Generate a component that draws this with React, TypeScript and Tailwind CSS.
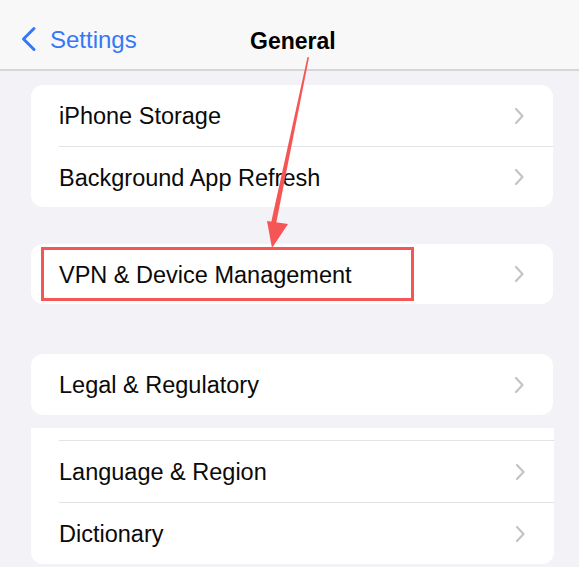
import React from 'react';

const font = { fontFamily: '"Liberation Sans", Arial, sans-serif' };

function Chevron() {
  return (
    <svg width="12" height="18" viewBox="0 0 12 18" className="shrink-0">
      <path d="M3 2 L9.5 9 L3 16" fill="none" stroke="#c4c4c7" strokeWidth="2.2" strokeLinecap="round" strokeLinejoin="round" />
    </svg>
  );
}

function Row({ label, divider = false, tall = false }: { label: string; divider?: boolean; tall?: boolean }) {
  return (
    <div className="pl-[28px]">
      <div
        className={`flex items-center justify-between pr-[28px] ${tall ? 'h-[62px]' : 'h-[61px]'} ${divider ? 'border-t border-[#e3e3e6]' : ''}`}
      >
        <span className="pt-[3px] text-[23.5px] text-[#0a0a0a]">{label}</span>
        <Chevron />
      </div>
    </div>
  );
}

export default function App() {
  return (
    <div className="relative h-[567px] w-[579px] overflow-hidden bg-[#f2f2f7]" style={font}>
      <div className="relative flex h-[71px] items-center border-b-2 border-[#d6d6da] bg-[#f8f8f8]">
        <div className="flex items-center gap-[12px] pl-[20px] pt-[8px] text-[#3478f6]">
          <svg width="18" height="26" viewBox="0 0 18 26">
            <path d="M14 2.5 L3.5 13 L14 23.5" fill="none" stroke="#3478f6" strokeWidth="3" strokeLinecap="round" strokeLinejoin="round" />
          </svg>
          <span className="pt-[3px] text-[24px]">Settings</span>
        </div>
        <span className="absolute left-[250px] top-[24px] text-[23px] font-bold text-black">General</span>
      </div>

      <div className="flex flex-col px-[31px] pt-[14px]">
        <div className="overflow-hidden rounded-[12px] bg-white w-[522px]">
          <Row label="iPhone Storage" />
          <Row label="Background App Refresh" divider />
        </div>

        <div className="relative mt-[37px] h-[60px] w-[522px] rounded-[12px] bg-white">
          <div className="flex h-full items-center justify-between pl-[28px] pr-[28px]">
            <span className="pt-[3px] text-[23.5px] text-[#0a0a0a]">VPN &amp; Device Management</span>
            <Chevron />
          </div>
          <div className="absolute left-[10px] top-[3px] h-[54px] w-[373px] border-[3px] border-[#f65555]" />
        </div>

        <div className="mt-[50px] w-[522px] rounded-[12px] bg-white">
          <div className="flex h-[61px] items-center justify-between pl-[28px] pr-[28px]">
            <span className="pt-[3px] text-[23.5px] text-[#0a0a0a]">Legal &amp; Regulatory</span>
            <Chevron />
          </div>
        </div>

        <div className="mt-[13px] w-[523px] rounded-b-[12px] bg-white">
          <div className="h-[12px]" />
          <Row label="Language & Region" divider tall />
          <Row label="Dictionary" divider tall />
        </div>
      </div>

      <svg className="pointer-events-none absolute left-0 top-0" width="579" height="567" viewBox="0 0 579 567">
        <polygon points="307.5,57 309,57.5 276,224 271,223" fill="#f65555" />
        <polygon points="267,221 288,224 272,248" fill="#f65555" />
      </svg>
    </div>
  );
}
